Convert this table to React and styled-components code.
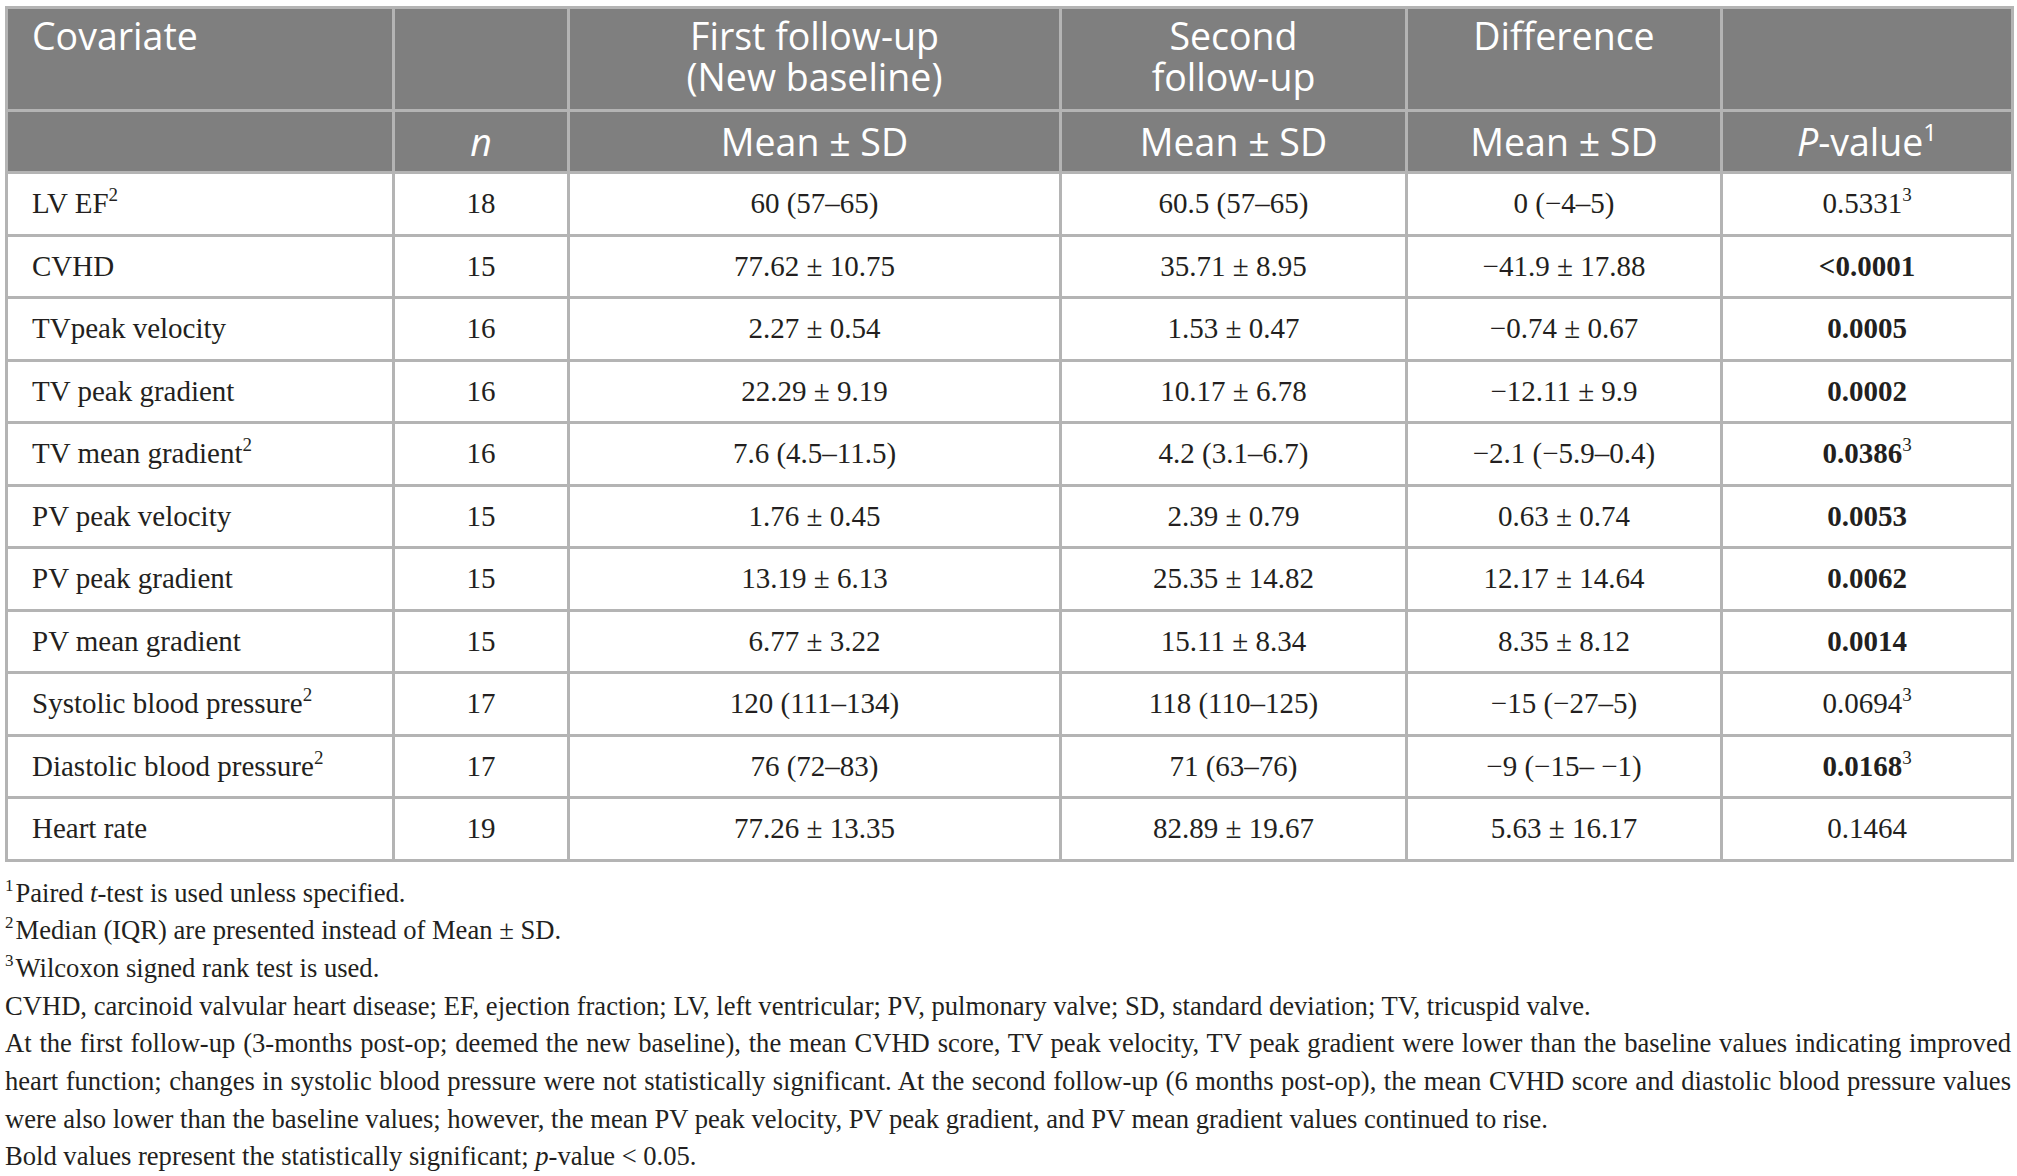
import React from "react";
import styled, { createGlobalStyle } from "styled-components";

const GlobalStyle = createGlobalStyle`
  html, body {
    margin: 0;
    padding: 0;
    background: #ffffff;
  }
`;

const rows = [
  { name: "LV EF", nameSup: "2", n: 18, first: "60 (57–65)", second: "60.5 (57–65)", diff: "0 (−4–5)", p: "0.5331", pSup: "3" },
  { name: "CVHD", n: 15, first: "77.62 ± 10.75", second: "35.71 ± 8.95", diff: "−41.9 ± 17.88", p: "<0.0001", bold: true },
  { name: "TVpeak velocity", n: 16, first: "2.27 ± 0.54", second: "1.53 ± 0.47", diff: "−0.74 ± 0.67", p: "0.0005", bold: true },
  { name: "TV peak gradient", n: 16, first: "22.29 ± 9.19", second: "10.17 ± 6.78", diff: "−12.11 ± 9.9", p: "0.0002", bold: true },
  { name: "TV mean gradient", nameSup: "2", n: 16, first: "7.6 (4.5–11.5)", second: "4.2 (3.1–6.7)", diff: "−2.1 (−5.9–0.4)", p: "0.0386", pSup: "3", bold: true },
  { name: "PV peak velocity", n: 15, first: "1.76 ± 0.45", second: "2.39 ± 0.79", diff: "0.63 ± 0.74", p: "0.0053", bold: true },
  { name: "PV peak gradient", n: 15, first: "13.19 ± 6.13", second: "25.35 ± 14.82", diff: "12.17 ± 14.64", p: "0.0062", bold: true },
  { name: "PV mean gradient", n: 15, first: "6.77 ± 3.22", second: "15.11 ± 8.34", diff: "8.35 ± 8.12", p: "0.0014", bold: true },
  { name: "Systolic blood pressure", nameSup: "2", n: 17, first: "120 (111–134)", second: "118 (110–125)", diff: "−15 (−27–5)", p: "0.0694", pSup: "3" },
  { name: "Diastolic blood pressure", nameSup: "2", n: 17, first: "76 (72–83)", second: "71 (63–76)", diff: "−9 (−15– −1)", p: "0.0168", pSup: "3", bold: true },
  { name: "Heart rate", n: 19, first: "77.26 ± 13.35", second: "82.89 ± 19.67", diff: "5.63 ± 16.17", p: "0.1464" },
];

const colWidths = [387, 175, 492, 346, 315, 291];

function App() {
  return (
    <Page>
      <GlobalStyle />
      <Table>
        <colgroup>
          {colWidths.map((w, i) => (
            <col key={i} style={{ width: w }} />
          ))}
        </colgroup>
        <thead>
          <TopRow>
            <HeadCell align="left">Covariate</HeadCell>
            <HeadCell />
            <HeadCell>
              <HeadLine>First follow-up</HeadLine>
              <HeadLine>(New baseline)</HeadLine>
            </HeadCell>
            <HeadCell>
              <HeadLine>Second</HeadLine>
              <HeadLine>follow-up</HeadLine>
            </HeadCell>
            <HeadCell>Difference</HeadCell>
            <HeadCell />
          </TopRow>
          <SubRow>
            <HeadCell />
            <HeadCell>
              <i>n</i>
            </HeadCell>
            <HeadCell>Mean ± SD</HeadCell>
            <HeadCell>Mean ± SD</HeadCell>
            <HeadCell>Mean ± SD</HeadCell>
            <HeadCell>
              <i>P</i>-value<HeadSup>1</HeadSup>
            </HeadCell>
          </SubRow>
        </thead>
        <tbody>
          {rows.map((r) => (
            <BodyRow key={r.name}>
              <Cell align="left">
                {r.name}
                {r.nameSup && <Sup>{r.nameSup}</Sup>}
              </Cell>
              <Cell>{r.n}</Cell>
              <Cell>{r.first}</Cell>
              <Cell>{r.second}</Cell>
              <Cell>{r.diff}</Cell>
              <Cell bold={r.bold}>
                {r.p}
                {r.pSup && <Sup>{r.pSup}</Sup>}
              </Cell>
            </BodyRow>
          ))}
        </tbody>
      </Table>

      <Notes>
        <Note>
          <NoteSup>1</NoteSup>Paired <i>t</i>-test is used unless specified.
        </Note>
        <Note>
          <NoteSup>2</NoteSup>Median (IQR) are presented instead of Mean ± SD.
        </Note>
        <Note>
          <NoteSup>3</NoteSup>Wilcoxon signed rank test is used.
        </Note>
        <Note>
          CVHD, carcinoid valvular heart disease; EF, ejection fraction; LV, left ventricular; PV, pulmonary valve; SD,
          standard deviation; TV, tricuspid valve.
        </Note>
        <Note justify>
          At the first follow-up (3-months post-op; deemed the new baseline), the mean CVHD score, TV peak velocity, TV
          peak gradient were lower than the baseline values indicating improved heart function; changes in systolic blood
          pressure were not statistically significant. At the second follow-up (6 months post-op), the mean CVHD score
          and diastolic blood pressure values were also lower than the baseline values; however, the mean PV peak
          velocity, PV peak gradient, and PV mean gradient values continued to rise.
        </Note>
        <Note>
          Bold values represent the statistically significant; <i>p</i>-value &lt; 0.05.
        </Note>
      </Notes>
    </Page>
  );
}

export default App;

const Page = styled.div`
  width: 2006px;
  padding: 6px 0 0 5px;
  color: #231f20;
`;

const Table = styled.table`
  width: 2006px;
  table-layout: fixed;
  border-collapse: collapse;
  border: 3px solid #b4b4b4;
`;

const TopRow = styled.tr`
  height: 103px;

  th {
    vertical-align: top;
    padding-top: 6px;
  }
`;

const SubRow = styled.tr`
  height: 62px;

  th {
    vertical-align: middle;
  }
`;

const HeadCell = styled.th`
  background: #7f7f7f;
  color: #ffffff;
  border: 3px solid #b4b4b4;
  font-family: "Open Sans", "Noto Sans", sans-serif;
  font-weight: 400;
  font-size: 37.5px;
  line-height: 41px;
  text-align: ${(p) => p.align || "center"};
  padding: 0 24px;
`;

const HeadLine = styled.div`
  height: 41px;
  line-height: 41px;
`;

const HeadSup = styled.sup`
  font-size: 24px;
  line-height: 0;
  vertical-align: 15px;
`;

const BodyRow = styled.tr`
  height: 62.5px;
`;

const Cell = styled.td`
  border: 3px solid #b4b4b4;
  font-family: "Liberation Serif", "Times New Roman", serif;
  font-size: 29px;
  font-weight: ${(p) => (p.bold ? 700 : 400)};
  text-align: ${(p) => p.align || "center"};
  vertical-align: middle;
  padding: 0 24px;
  white-space: nowrap;
`;

const Sup = styled.sup`
  font-size: 19px;
  line-height: 0;
  vertical-align: 12px;
  font-weight: 400;
`;

const Notes = styled.div`
  margin-top: 13px;
  font-family: "Liberation Serif", "Times New Roman", serif;
  font-size: 26.6px;
  line-height: 37.7px;
`;

const Note = styled.p`
  margin: 0;
  text-align: ${(p) => (p.justify ? "justify" : "left")};
`;

const NoteSup = styled.sup`
  font-size: 17px;
  line-height: 0;
  vertical-align: 11px;
  margin-right: 2px;
`;
